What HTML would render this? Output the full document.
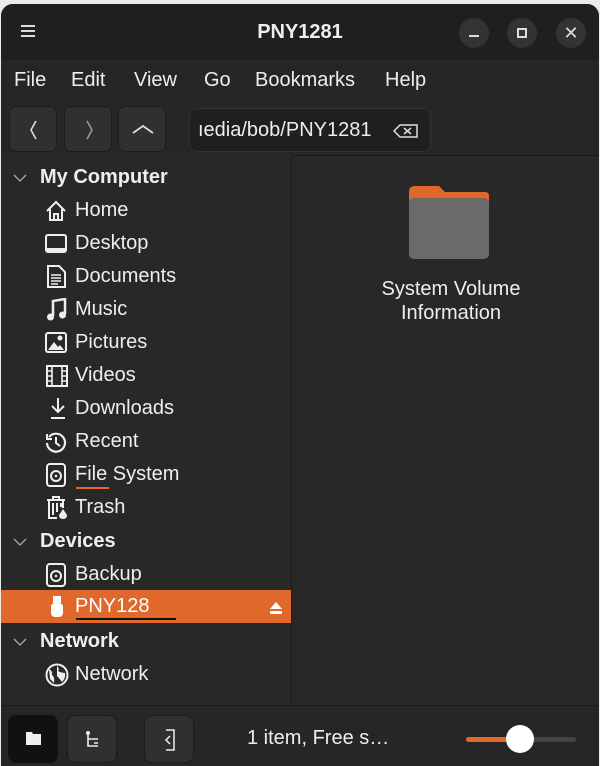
<!DOCTYPE html>
<html><head><meta charset="utf-8"><style>
*{margin:0;padding:0;box-sizing:border-box}
body{width:600px;height:766px;background:#ececec;font-family:"Liberation Sans",sans-serif;color:#eee;position:relative;overflow:hidden}
.win{position:absolute;left:1px;top:4px;width:598px;height:762px;background:#282828;border-radius:12px 12px 0 0;overflow:hidden}
.hdr{position:absolute;left:0;top:0;width:598px;height:56px;background:#1f1f1f}
.abs{position:absolute}
.cb{position:absolute;top:14px;width:30px;height:30px;border-radius:50%;background:#333}
.menu{position:absolute;top:56px;left:0;width:598px;height:42px;background:#262626;font-size:20px}
.menu span{position:absolute;top:9px}
.tb{position:absolute;top:98px;left:0;width:598px;height:54px;background:#262626;border-bottom:1px solid #1a1a1a}
.btn{position:absolute;top:4px;width:48px;height:46px;border-radius:7px;background:#303030;border:1px solid #1c1c1c}
.side{position:absolute;top:150px;left:0;width:290px;height:551px;background:#282828}
.divv{position:absolute;left:290px;top:153px;width:1px;height:548px;background:#1c1c1c}
.row{position:absolute;left:0;width:290px;height:33px;font-size:20px}
.row .t{position:absolute;left:74px;top:5px}
.row.h .t{left:39px;font-weight:bold}
.row svg{position:absolute}
.bot{position:absolute;top:701px;left:0;width:598px;height:61px;background:#262626;border-top:1px solid #1c1c1c}
</style></head><body>
<div class="win">
 <div class="hdr">
  <div class="abs" style="left:20px;top:21px;width:14px;height:2px;background:#ddd;box-shadow:0 5px 0 #ddd,0 10px 0 #ddd"></div>
  <div class="abs" style="left:0;width:598px;top:17px;text-align:center;font-weight:bold;font-size:20px">PNY1281</div>
  <div class="cb" style="left:458px"><div class="abs" style="left:10px;top:17px;width:10px;height:2px;background:#ddd"></div></div>
  <div class="cb" style="left:506px"><div class="abs" style="left:10px;top:10px;width:10px;height:10px;border:2px solid #ddd"></div></div>
  <div class="cb" style="left:555px;color:#ddd;text-align:center;line-height:30px;font-size:18px">✕</div>
 </div>
 <div class="menu"><span style="left:13px">File</span><span style="left:70px">Edit</span><span style="left:133px">View</span><span style="left:203px">Go</span><span style="left:254px">Bookmarks</span><span style="left:384px">Help</span></div>
 <div class="tb">
  <div class="btn" style="left:8px"><svg width="48" height="46"><path d="M26 14 L21 23 L26 32" stroke="#ddd" stroke-width="1.6" fill="none"/></svg></div>
  <div class="btn" style="left:63px"><svg width="48" height="46"><path d="M22 14 L27 23 L22 32" stroke="#999" stroke-width="1.6" fill="none"/></svg></div>
  <div class="btn" style="left:117px"><svg width="48" height="46"><path d="M14 26 L24 19 L34 26" stroke="#ddd" stroke-width="1.8" fill="none"/></svg></div>
  <div class="abs" style="left:188px;top:6px;width:242px;height:44px;border-radius:8px;background:#1f1f1f;border:1px solid #333;overflow:hidden;font-size:20px">
   <span class="abs" style="left:8px;top:10px;white-space:nowrap">ıedia/bob/PNY1281</span>
   <svg class="abs" style="left:203px;top:14px" width="26" height="16"><path d="M1 8 L7 2 H24 V14 H7 Z" stroke="#ddd" stroke-width="1.5" fill="none"/><path d="M11 5 L18 11 M18 5 L11 11" stroke="#ddd" stroke-width="1.5"/></svg>
  </div>
 </div>
 <div class="side">
  <div class="row h" style="top:7px"><svg style="left:12px;top:13px" width="14" height="8"><path d="M1 1 L7 7 L13 1" stroke="#aaa" fill="none" stroke-width="1.3"/></svg><span class="t">My Computer</span></div>
  <div class="row" style="top:40px"><svg style="left:44px;top:6px" width="22" height="22"><path d="M2 11 L11 2 L20 11 M5 9 V20 H17 V9 M9 20 V14 H13 V20" stroke="#eee" stroke-width="2" fill="none"/></svg><span class="t">Home</span></div>
  <div class="row" style="top:73px"><svg style="left:44px;top:6px" width="22" height="22"><rect x="1" y="2" width="20" height="17" rx="2" stroke="#eee" stroke-width="2" fill="none"/><rect x="1" y="15" width="20" height="4" fill="#eee"/></svg><span class="t">Desktop</span></div>
  <div class="row" style="top:106px"><svg style="left:45px;top:5px" width="22" height="24"><path d="M2 1 H13 L19 7 V22 H2 Z" stroke="#eee" stroke-width="2" fill="none"/><path d="M5 10 H15 M5 13 H15 M5 16 H15 M5 19 H12" stroke="#eee" stroke-width="1.5"/></svg><span class="t">Documents</span></div>
  <div class="row" style="top:139px"><svg style="left:45px;top:5px" width="22" height="24"><path d="M7 18 V3 L19 1 V16" stroke="#eee" stroke-width="2.5" fill="none"/><circle cx="4.5" cy="19" r="3.5" fill="#eee"/><circle cx="16.5" cy="17" r="3.5" fill="#eee"/></svg><span class="t">Music</span></div>
  <div class="row" style="top:172px"><svg style="left:44px;top:6px" width="22" height="22"><rect x="1" y="1" width="20" height="19" rx="2" stroke="#eee" stroke-width="2" fill="none"/><path d="M3 18 L9 10 L13 15 L15 13 L19 18 Z" fill="#eee"/><circle cx="15" cy="6" r="2.5" fill="#eee"/></svg><span class="t">Pictures</span></div>
  <div class="row" style="top:205px"><svg style="left:45px;top:6px" width="22" height="22"><rect x="1" y="1" width="20" height="20" stroke="#eee" stroke-width="2" fill="none"/><path d="M6 1 V21 M16 1 V21 M1 6 H6 M1 11 H6 M1 16 H6 M16 6 H21 M16 11 H21 M16 16 H21" stroke="#eee" stroke-width="1.6"/></svg><span class="t">Videos</span></div>
  <div class="row" style="top:238px"><svg style="left:47px;top:5px" width="20" height="24"><path d="M10 1 V15 M4 9 L10 15 L16 9 M3 21 H17" stroke="#eee" stroke-width="2" fill="none"/></svg><span class="t">Downloads</span></div>
  <div class="row" style="top:271px"><svg style="left:44px;top:6px" width="22" height="22"><path d="M4 6 A9 9 0 1 1 2 12" stroke="#eee" stroke-width="2.2" fill="none"/><path d="M2 3 V8 H7" stroke="#eee" stroke-width="2" fill="none"/><path d="M11 6 V12 L15 15" stroke="#eee" stroke-width="2" fill="none"/></svg><span class="t">Recent</span></div>
  <div class="row" style="top:304px"><svg style="left:45px;top:5px" width="22" height="24"><rect x="1" y="1" width="18" height="22" rx="3" stroke="#eee" stroke-width="2" fill="none"/><circle cx="10" cy="13" r="5" stroke="#eee" stroke-width="2" fill="none"/><circle cx="10" cy="13" r="1.3" fill="#eee"/></svg><span class="t">File System</span><div class="abs" style="left:75px;top:29px;width:33px;height:2px;background:#e2682a"></div></div>
  <div class="row" style="top:337px"><svg style="left:45px;top:4px" width="24" height="26"><path d="M1 5 H19 M7 5 V2 H13 V5 M3 5 V23 H11 M17 5 V13 M7 8 V20 M11 8 V17 M15 8 V12" stroke="#eee" stroke-width="2" fill="none"/><path d="M17 14 L21 20 Q21 24 17 24 Q13 24 13 20 Z" fill="#eee"/></svg><span class="t">Trash</span></div>
  <div class="row h" style="top:371px"><svg style="left:12px;top:13px" width="14" height="8"><path d="M1 1 L7 7 L13 1" stroke="#aaa" fill="none" stroke-width="1.3"/></svg><span class="t">Devices</span></div>
  <div class="row" style="top:404px"><svg style="left:45px;top:5px" width="22" height="24"><rect x="1" y="1" width="18" height="22" rx="3" stroke="#eee" stroke-width="2" fill="none"/><circle cx="10" cy="13" r="5" stroke="#eee" stroke-width="2" fill="none"/><circle cx="10" cy="13" r="1.3" fill="#eee"/></svg><span class="t">Backup</span></div>
  <div class="row" style="top:436px;height:33px;background:#e1682b"><svg style="left:49px;top:5px" width="14" height="24"><rect x="3" y="1" width="8" height="7" fill="#fff"/><rect x="1" y="8" width="12" height="14" rx="4" fill="#fff"/></svg><span class="t" style="color:#fff">PNY128</span><div class="abs" style="left:75px;top:28px;width:100px;height:2px;background:#111"></div><svg style="left:268px;top:11px" width="14" height="13"><path d="M1 8 L7 1 L13 8 Z M1 10 H13 V13 H1 Z" fill="#fff"/></svg></div>
  <div class="row h" style="top:471px"><svg style="left:12px;top:13px" width="14" height="8"><path d="M1 1 L7 7 L13 1" stroke="#aaa" fill="none" stroke-width="1.3"/></svg><span class="t">Network</span></div>
  <div class="row" style="top:504px"><svg style="left:44px;top:5px" width="24" height="24"><circle cx="12" cy="12" r="10.5" stroke="#eee" stroke-width="2" fill="none"/><path d="M4 6 Q8 8 7 12 Q10 14 9 20 L5 16 Z M12 3 Q15 6 13 8 Q17 10 20 10 Q21 15 17 19 Q14 15 12 13 Z" fill="#eee"/></svg><span class="t">Network</span></div>
 </div>
 <div class="divv"></div>
 <div class="abs" style="left:408px;top:182px;width:80px;height:80px">
  <svg width="82" height="82" viewBox="0 0 82 82"><path d="M0 6 Q0 0 6 0 H30 L36 6 H76 Q80 6 80 10 V20 H0 Z" fill="#e0672a"/><rect x="0" y="12" width="80" height="61" rx="5" fill="#6a6a6a"/></svg>
 </div>
 <div class="abs" style="left:340px;top:273px;width:220px;text-align:center;font-size:20px;line-height:24px">System Volume<br>Information</div>
 <div class="bot">
  <div class="abs" style="left:7px;top:9px;width:50px;height:48px;border-radius:8px;background:#111"><svg style="position:absolute;left:18px;top:17px" width="16" height="13"><path d="M0 0 H6 L7 2 H15 V13 H0 Z" fill="#eee"/></svg></div>
  <div class="abs" style="left:66px;top:9px;width:50px;height:48px;border-radius:8px;background:#303030;border:1px solid #1c1c1c"><svg style="position:absolute;left:17px;top:15px" width="16" height="18"><path d="M3 2 V15 H13 M3 8 H13 M9 12 H13" stroke="#eee" stroke-width="1.6" fill="none"/><circle cx="3" cy="2" r="2" fill="#eee"/></svg></div>
  <div class="abs" style="left:143px;top:9px;width:50px;height:48px;border-radius:8px;background:#303030;border:1px solid #1c1c1c"><svg style="position:absolute;left:15px;top:13px" width="20" height="22"><path d="M6 1 H14 V21 H6" stroke="#eee" stroke-width="1.5" fill="none"/><path d="M10 7 L6 11 L10 15" stroke="#eee" stroke-width="1.5" fill="none"/></svg></div>
  <div class="abs" style="left:246px;top:21px;font-size:20px">1 item, Free s…</div>
  <div class="abs" style="left:465px;top:31px;width:110px;height:5px;border-radius:3px;background:#444"></div>
  <div class="abs" style="left:465px;top:31px;width:55px;height:5px;border-radius:3px;background:#e1682b"></div>
  <div class="abs" style="left:505px;top:19px;width:28px;height:28px;border-radius:50%;background:#fff"></div>
 </div>
</div>
</body></html>
